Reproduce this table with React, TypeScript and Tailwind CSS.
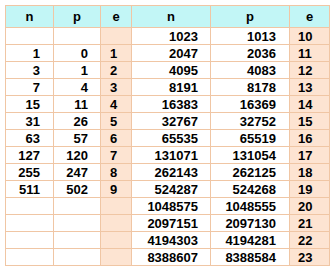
import React from "react";

const rows: [string, string, string, string, string, string][] = [
  ["", "", "", "1023", "1013", "10"],
  ["1", "0", "1", "2047", "2036", "11"],
  ["3", "1", "2", "4095", "4083", "12"],
  ["7", "4", "3", "8191", "8178", "13"],
  ["15", "11", "4", "16383", "16369", "14"],
  ["31", "26", "5", "32767", "32752", "15"],
  ["63", "57", "6", "65535", "65519", "16"],
  ["127", "120", "7", "131071", "131054", "17"],
  ["255", "247", "8", "262143", "262125", "18"],
  ["511", "502", "9", "524287", "524268", "19"],
  ["", "", "", "1048575", "1048555", "20"],
  ["", "", "", "2097151", "2097130", "21"],
  ["", "", "", "4194303", "4194281", "22"],
  ["", "", "", "8388607", "8388584", "23"],
];

export default function App() {
  return (
    <div className="w-[335px] h-[271px] bg-white p-[5px]" style={{ fontFamily: '"Liberation Sans", Arial, sans-serif' }}>
      <div className="grid grid-cols-[47px_46px_30px_78px_78px_39px] gap-px bg-[#f0c6a4] p-px w-fit text-[13px] font-bold text-black leading-none">
        {["n", "p", "e", "n", "p", "e"].map((h, i) => (
          <div key={"h" + i} className="h-[21px] bg-[#c2f6f6] flex items-center justify-center">
            {h}
          </div>
        ))}
        {rows.map((r, ri) => (
          <React.Fragment key={ri}>
            <div className="h-[16px] bg-white flex items-center justify-end pr-[13px]">{r[0]}</div>
            <div className="h-[16px] bg-white flex items-center justify-end pr-[12px]">{r[1]}</div>
            <div className="h-[16px] bg-[#fde4d2] flex items-center pl-[9px]">{r[2]}</div>
            <div className="h-[16px] bg-white flex items-center justify-end pr-[12px]">{r[3]}</div>
            <div className="h-[16px] bg-white flex items-center justify-end pr-[13px]">{r[4]}</div>
            <div className="h-[16px] bg-[#fde4d2] flex items-center pl-[8px]">{r[5]}</div>
          </React.Fragment>
        ))}
      </div>
    </div>
  );
}
